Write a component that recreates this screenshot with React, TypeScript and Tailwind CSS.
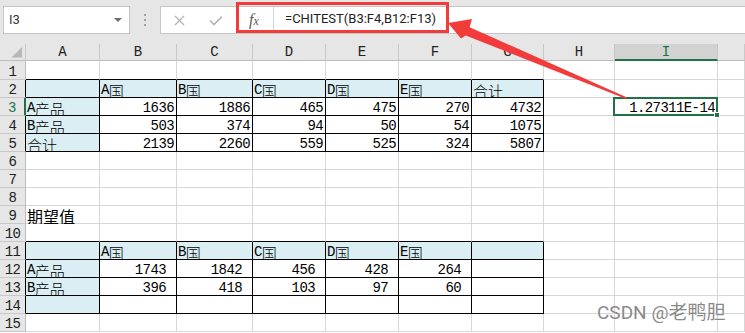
import React from "react";

const GREEN = "#217346";

type V = string | number | null | undefined;

const rowsData: Record<number, V[]> = {
  2: ["", "A国", "B国", "C国", "D国", "E国", "合计"],
  3: ["A产品", 1636, 1886, 465, 475, 270, 4732, null, "1.27311E-14"],
  4: ["B产品", 503, 374, 94, 50, 54, 1075],
  5: ["合计", 2139, 2260, 559, 525, 324, 5807],
  9: ["期望值"],
  11: ["", "A国", "B国", "C国", "D国", "E国", ""],
  12: ["A产品", 1743, 1842, 456, 428, 264, ""],
  13: ["B产品", 396, 418, 103, 97, 60, ""],
  14: ["", "", "", "", "", "", ""],
};

const LETTERS = ["A", "B", "C", "D", "E", "F", "G", "H", "I", ""];

function Txt({ s, big }: { s: string; big?: boolean }) {
  const parts = s.split(/([\u4e00-\u9fff]+)/);
  return (
    <>
      {parts.map((p, i) =>
        /[\u4e00-\u9fff]/.test(p) ? (
          <span
            key={i}
            className={
              big
                ? "font-['Noto_Sans_CJK_SC',sans-serif] text-[16px] tracking-normal"
                : "font-['Noto_Sans_CJK_SC',sans-serif] text-[15px] tracking-normal font-light"
            }
          >
            {p}
          </span>
        ) : (
          <span key={i}>{p}</span>
        )
      )}
    </>
  );
}

function Cell({ r, c }: { r: number; c: number }) {
  const v = rowsData[r]?.[c - 1];
  const inT1 = r >= 2 && r <= 5 && c >= 1 && c <= 7;
  const inT2 = r >= 11 && r <= 14 && c >= 1 && c <= 7;
  const inT = inT1 || inT2;
  const blackB = inT || ((r === 1 || r === 10) && c >= 1 && c <= 7);
  const blackR = inT;
  const fill = inT && (r === 2 || r === 11 || c === 1);
  const isNum = typeof v === "number" || (r === 3 && c === 9);
  const sel = r === 3 && c === 9;

  const cls = [
    "relative flex items-end whitespace-nowrap border-r border-b leading-[13px] text-[14px] tracking-[-0.6px] text-black",
    blackR ? "border-r-black" : "border-r-[#d6d6d6]",
    blackB ? "border-b-black" : "border-b-[#d6d6d6]",
    fill ? "bg-[#daeef3]" : "bg-white",
    isNum ? (inT2 ? "justify-end pr-[10px]" : "justify-end pr-[2px]") : "pl-[1px]",
  ].join(" ");

  return (
    <div className={cls}>
      {v !== null && v !== undefined && v !== "" ? (
        <Txt s={String(v)} big={r === 9} />
      ) : null}
      {sel ? (
        <>
          <div className="absolute left-[-2px] top-[-1px] z-10 h-[19px] w-[105px] border-2 border-[#217346]" />
          <div className="absolute left-[99px] top-[14px] z-10 h-[6px] w-[6px] border border-white bg-[#217346]" />
        </>
      ) : null}
    </div>
  );
}

function TopBar() {
  return (
    <div className="flex h-[44px] items-start bg-[#e6e6e6] pt-[6px] font-['Roboto',sans-serif]">
      {/* name box */}
      <div className="ml-[3px] flex h-[28px] w-[127px] items-center justify-between border border-[#c6c6c6] bg-white pl-[5px] pr-[7px]">
        <span className="text-[13px] text-[#333]">I3</span>
        <div className="h-0 w-0 border-l-[4px] border-r-[4px] border-t-[4px] border-l-transparent border-r-transparent border-t-[#6e6e6e]" />
      </div>
      {/* dots */}
      <div className="flex h-[28px] w-[30px] flex-col items-center justify-center gap-[3px]">
        <div className="h-[2px] w-[2px] bg-[#a0a0a0]" />
        <div className="h-[2px] w-[2px] bg-[#a0a0a0]" />
        <div className="h-[2px] w-[2px] bg-[#a0a0a0]" />
      </div>
      {/* formula bar */}
      <div className="flex h-[28px] flex-1 border border-r-0 border-[#c6c6c6] bg-white">
        <div className="flex w-[36px] items-center justify-center">
          <svg width="11" height="11" viewBox="0 0 11 11">
            <path d="M1 1 L10 10 M10 1 L1 10" stroke="#b4b4b4" strokeWidth="1.3" fill="none" />
          </svg>
        </div>
        <div className="flex w-[38px] items-center justify-center">
          <svg width="14" height="11" viewBox="0 0 14 11">
            <path d="M1 5.5 L5 9.5 L13 1.5" stroke="#b4b4b4" strokeWidth="1.6" fill="none" />
          </svg>
        </div>
        <div className="flex w-[38px] items-center justify-center pb-[1px]">
          <span className="font-['Liberation_Serif',serif] text-[16px] italic leading-none text-[#5a5a5a]">
            f<span className="text-[12px]">x</span>
          </span>
        </div>
        <div className="flex flex-1 items-center border-l border-[#d4d4d4] pl-[11px] pb-[2px]">
          <span className="text-[13px] text-[#222]">=CHITEST(B3:F4,B12:F13)</span>
        </div>
      </div>
    </div>
  );
}

export default function App() {
  const rows = Array.from({ length: 15 }, (_, i) => i + 1);
  const cols = Array.from({ length: 10 }, (_, i) => i + 1);
  return (
    <div className="relative h-[333px] w-[745px] overflow-hidden bg-white">
      <TopBar />
      <div className="grid grid-cols-[26px_74px_77px_76px_73px_73px_73px_72px_71px_103px_1fr] grid-rows-[17px_19px_repeat(14,18px)] font-['Liberation_Mono','Noto_Sans_CJK_SC',monospace]">
        {/* header row */}
        <div className="relative border-b border-r border-b-[#bcbcbc] border-r-[#c8c8c8] bg-[#e6e6e6]">
          <svg className="absolute left-[11px] top-[3px]" width="12" height="11" viewBox="0 0 12 11">
            <polygon points="11,0 11,10.5 0.5,10.5" fill="#b8b8b8" />
          </svg>
        </div>
        {LETTERS.map((l, i) =>
          i === 8 ? (
            <div
              key={i}
              className="flex items-end justify-center border-b-2 border-r border-b-[#217346] border-r-[#c8c8c8] bg-[#d2d2d2] text-[14px] leading-[13px] text-[#217346]"
            >
              {l}
            </div>
          ) : (
            <div
              key={i}
              className="flex items-end justify-center border-b border-r border-b-[#bcbcbc] border-r-[#c8c8c8] bg-[#e6e6e6] pb-[1px] text-[14px] leading-[13px] text-[#222]"
            >
              {l}
            </div>
          )
        )}
        {rows.map((r) => (
          <React.Fragment key={r}>
            {r === 3 ? (
              <div className="flex items-end justify-center border-b border-r-2 border-b-[#c8c8c8] border-r-[#217346] bg-[#e6e6e6] text-[14px] leading-[13px] tracking-[-0.6px] text-[#217346]">
                {r}
              </div>
            ) : (
              <div
                className={
                  (r >= 2 && r <= 5) || (r >= 11 && r <= 14)
                    ? "flex items-end justify-center border-b border-r border-b-[#c8c8c8] border-r-black bg-[#e6e6e6] text-[14px] leading-[13px] tracking-[-0.6px] text-[#222]"
                    : "flex items-end justify-center border-b border-r border-b-[#c8c8c8] border-r-[#bcbcbc] bg-[#e6e6e6] text-[14px] leading-[13px] tracking-[-0.6px] text-[#222]"
                }
              >
                {r}
              </div>
            )}
            {cols.map((c) => (
              <Cell key={c} r={r} c={c} />
            ))}
          </React.Fragment>
        ))}
      </div>

      {/* red highlight box */}
      <div className="pointer-events-none absolute left-[236px] top-[2px] z-20 h-[31px] w-[213px] border-[3px] border-[#f23b3b]" />

      {/* red arrow */}
      <svg className="pointer-events-none absolute left-0 top-0 z-20" width="745" height="333" viewBox="0 0 745 333">
        <polygon
          points="448,23 472,19 469.6,27.2 626.5,97.3 625.6,98.8 465.8,35.4 461,38.5"
          fill="#f23b3b"
        />
      </svg>

      {/* watermark */}
      <div className="pointer-events-none absolute left-[597px] top-[303px] z-20 whitespace-nowrap font-['Roboto','Noto_Sans_CJK_SC',sans-serif] text-[19px] leading-[19px] text-[#8a8a8a] [text-shadow:0_0_1px_#ffffff]">
        CSDN @老鸭胆
      </div>
    </div>
  );
}
